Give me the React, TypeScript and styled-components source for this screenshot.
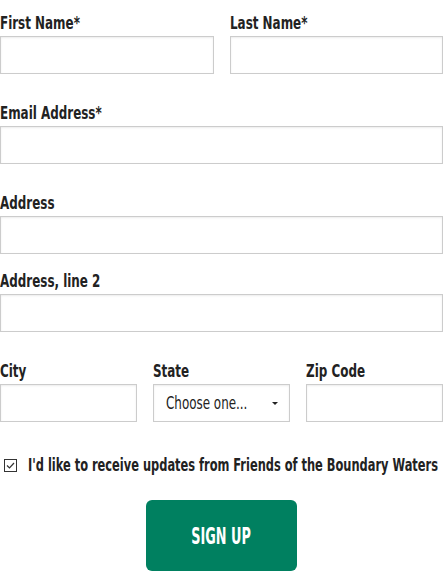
import React, { FC } from 'react';
import styled, { createGlobalStyle } from 'styled-components';

const GlobalStyle = createGlobalStyle`
  html, body {
    margin: 0;
    padding: 0;
    background: #ffffff;
    overflow-x: hidden;
  }
  body {
    font-family: 'DejaVu Sans Condensed', 'Liberation Sans', sans-serif;
  }
`;

const Form = styled.form`
  display: flex;
  flex-direction: column;
  width: 443px;
  padding-top: 13px;
  overflow: hidden;
`;

// the reference face is much narrower than anything installed
const Narrow = styled.span<{ $scale: number }>`
  display: inline-block;
  white-space: nowrap;
  transform: scaleX(${(p) => p.$scale});
  transform-origin: left center;
`;

const Row = styled.div<{ $cols: number; $top?: number }>`
  display: grid;
  grid-template-columns: repeat(${(p) => p.$cols}, 1fr);
  column-gap: 16px;
  margin-top: ${(p) => p.$top ?? 0}px;
`;

const Field = styled.div`
  display: flex;
  flex-direction: column;
  min-width: 0;
`;

const Label = styled.label`
  font-size: 17px;
  line-height: 20px;
  font-weight: 700;
  color: #222222;
  margin-bottom: 3px;
`;

const Input = styled.input`
  box-sizing: border-box;
  height: 38px;
  width: 100%;
  border: 1px solid #cccccc;
  box-shadow: inset 0 1px 2px rgba(0, 0, 0, 0.08);
  background: #ffffff;
  margin: 0;
  padding: 0 10px;
  font-family: inherit;
  font-size: 16px;
  outline: none;
`;

const SelectBox = styled.div`
  box-sizing: border-box;
  height: 38px;
  border: 1px solid #cccccc;
  box-shadow: inset 0 1px 2px rgba(0, 0, 0, 0.08);
  display: flex;
  align-items: center;
  justify-content: space-between;
  padding: 0 11px 0 12px;
  font-size: 17px;
  color: #222222;
  overflow: hidden;
`;

const SelectText = styled.span`
  flex: 1;
  min-width: 0;
`;

const Caret = styled.span`
  flex: none;
  width: 0;
  height: 0;
  border-left: 3px solid transparent;
  border-right: 3px solid transparent;
  border-top: 3px solid #222222;
`;

const CheckRow = styled.label`
  display: flex;
  align-items: center;
  gap: 11px;
  margin-top: 33px;
  padding-left: 4px;
  font-size: 18px;
  line-height: 20px;
  font-weight: 700;
  color: #222222;
`;

const CheckBox = styled.span`
  box-sizing: border-box;
  flex: none;
  width: 13px;
  height: 13px;
  border: 1px solid #333333;
  display: flex;
  align-items: center;
  justify-content: center;
`;

const CheckText = styled.span`
  flex: 1;
  min-width: 0;
`;

const ButtonWrap = styled.div`
  display: flex;
  justify-content: center;
  margin-top: 25px;
`;

const SignUp = styled.button`
  width: 151px;
  height: 71px;
  border: none;
  border-radius: 6px;
  background: #008060;
  color: #ffffff;
  font-family: inherit;
  font-size: 23px;
  font-weight: 700;
  padding: 0;
  display: flex;
  align-items: center;
  justify-content: center;
  cursor: pointer;
`;

const ButtonText = styled.span`
  display: inline-block;
  white-space: nowrap;
  transform: scaleX(0.62);
`;

const FormLabel: FC<{ text: string }> = ({ text }) => (
  <Label>
    <Narrow $scale={0.78}>{text}</Narrow>
  </Label>
);

const App: FC = () => (
  <>
    <GlobalStyle />
    <Form onSubmit={(e) => e.preventDefault()}>
      <Row $cols={2}>
        <Field>
          <FormLabel text="First Name*" />
          <Input type="text" />
        </Field>
        <Field>
          <FormLabel text="Last Name*" />
          <Input type="text" />
        </Field>
      </Row>

      <Row $cols={1} $top={29}>
        <Field>
          <FormLabel text="Email Address*" />
          <Input type="email" />
        </Field>
      </Row>

      <Row $cols={1} $top={29}>
        <Field>
          <FormLabel text="Address" />
          <Input type="text" />
        </Field>
      </Row>

      <Row $cols={1} $top={17}>
        <Field>
          <FormLabel text="Address, line 2" />
          <Input type="text" />
        </Field>
      </Row>

      <Row $cols={3} $top={29}>
        <Field>
          <FormLabel text="City" />
          <Input type="text" />
        </Field>
        <Field>
          <FormLabel text="State" />
          <SelectBox>
            <SelectText>
              <Narrow $scale={0.78}>Choose one...</Narrow>
            </SelectText>
            <Caret />
          </SelectBox>
        </Field>
        <Field>
          <FormLabel text="Zip Code" />
          <Input type="text" />
        </Field>
      </Row>

      <CheckRow>
        <CheckBox>
          <svg width="9" height="7" viewBox="0 0 9 7">
            <path d="M1 3.5 L3.5 6 L8 1" fill="none" stroke="#333" strokeWidth="1.2" />
          </svg>
        </CheckBox>
        <CheckText>
          <Narrow $scale={0.705}>
            I'd like to receive updates from Friends of the Boundary Waters
          </Narrow>
        </CheckText>
      </CheckRow>

      <ButtonWrap>
        <SignUp type="submit">
          <ButtonText>SIGN UP</ButtonText>
        </SignUp>
      </ButtonWrap>
    </Form>
  </>
);

export default App;
